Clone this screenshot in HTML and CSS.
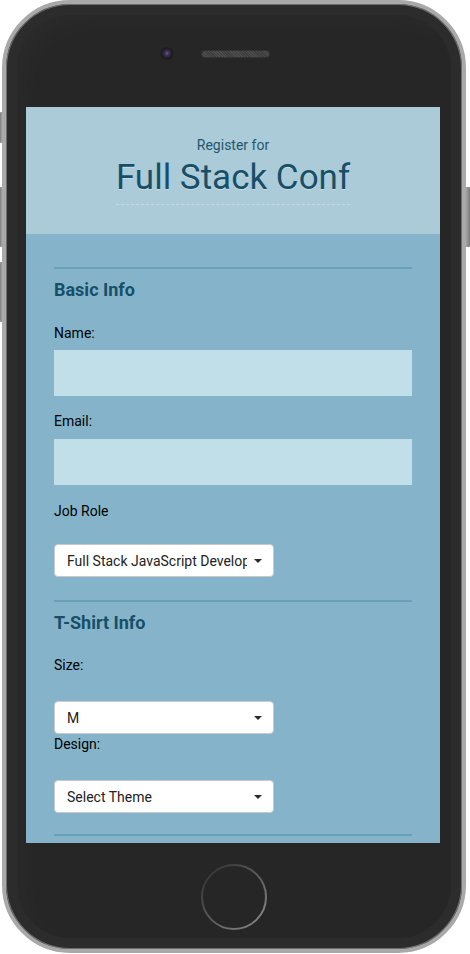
FILE: index.html
```
<!DOCTYPE html>
<html lang="en">
<head>
<meta charset="utf-8">
<title>Full Stack Conf</title>
<link rel="stylesheet" href="styles.css">
</head>
<body>
<div class="device">
  <div class="side side-left">
    <span class="btn btn-mute"></span>
    <span class="btn btn-vol"></span>
    <span class="btn btn-vol btn-vol2"></span>
  </div>
  <div class="phone">
    <div class="top-bezel">
      <span class="camera"></span>
      <span class="speaker"></span>
    </div>
    <div class="screen">
      <header class="hero">
        <span class="hero-pre">Register for</span>
        <h1 class="hero-title">Full Stack Conf</h1>
      </header>
      <main class="form">
        <section class="group">
          <hr class="rule">
          <h2 class="group-title">Basic Info</h2>
          <label class="label label-name" for="name">Name:</label>
          <input class="text-input" id="name" type="text">
          <label class="label label-email" for="mail">Email:</label>
          <input class="text-input text-input-email" id="mail" type="email">
          <label class="label label-job" for="title">Job Role</label>
          <div class="select-wrap select-job">
            <select class="select" id="title">
              <option>Full Stack JavaScript Developer</option>
            </select>
          </div>
        </section>
        <section class="group">
          <hr class="rule">
          <h2 class="group-title">T-Shirt Info</h2>
          <label class="label label-size" for="size">Size:</label>
          <div class="select-wrap select-size">
            <select class="select" id="size">
              <option>S</option>
              <option selected>M</option>
              <option>L</option>
              <option>XL</option>
            </select>
          </div>
          <label class="label label-design" for="design">Design:</label>
          <div class="select-wrap select-design">
            <select class="select" id="design">
              <option>Select Theme</option>
            </select>
          </div>
        </section>
        <section class="group">
          <hr class="rule rule-last">
        </section>
      </main>
    </div>
    <div class="bottom-bezel">
      <svg class="home" width="68" height="68" viewBox="0 0 68 68" aria-hidden="true">
        <defs>
          <linearGradient id="hg" x1="0" y1="0" x2="1" y2="1">
            <stop offset="0" stop-color="#2e2e2e"/>
            <stop offset="0.5" stop-color="#5a5a5a"/>
            <stop offset="1" stop-color="#8c8c8c"/>
          </linearGradient>
        </defs>
        <circle cx="34" cy="34" r="32" fill="none" stroke="url(#hg)" stroke-width="2"/>
      </svg>
    </div>
  </div>
  <div class="side side-right">
    <span class="btn btn-power"></span>
  </div>
</div>
</body>
</html>
```
FILE: styles.css
```
* { box-sizing: border-box; }

html, body {
  margin: 0;
  padding: 0;
  background: #ffffff;
}

body {
  font-family: Roboto, "Liberation Sans", sans-serif;
  width: 470px;
  height: 954px;
  overflow: hidden;
}

.device {
  display: flex;
  align-items: flex-start;
}

.side {
  display: flex;
  flex-direction: column;
}

.side-left {
  width: 2px;
  padding-top: 112px;
}

.side-right {
  width: 4px;
  padding-top: 187px;
}

.btn {
  display: block;
  background: linear-gradient(90deg, #7d7d7d, #a4a4a4);
  border-radius: 1px 0 0 1px;
}

.btn-mute { height: 31px; }
.btn-vol { height: 60px; margin-top: 44px; }
.btn-vol2 { margin-top: 15px; }

.btn-power {
  height: 60px;
  background: linear-gradient(90deg, #a4a4a4, #7d7d7d);
  border-radius: 0 1px 1px 0;
}

.phone {
  width: 464px;
  height: 953px;
  border: 4px solid #a9a9a9;
  border-radius: 68px;
  background: #262626;
  box-shadow:
    inset 0 0 0 1px #6d6d6d,
    inset 0 0 0 11px #2c2c2c,
    inset 12px 12px 40px rgba(255,255,255,0.03);
  display: flex;
  flex-direction: column;
}

.top-bezel {
  height: 103px;
  padding: 0 0 3px 154px;
  display: flex;
  align-items: center;
  gap: 28px;
}

.camera {
  width: 14px;
  height: 14px;
  border-radius: 50%;
  background: radial-gradient(circle at 50% 45%, #6b5a93 0, #3d3259 2px, #2a2438 4px, #1b1b1b 5px, #222 7px);
}

.speaker {
  width: 67px;
  height: 6px;
  border-radius: 3px;
  background:
    repeating-linear-gradient(45deg, #4d4d4d 0 1px, #3d3d3d 1px 2px);
  box-shadow: 0 0 0 1px #333;
}

.screen {
  width: 414px;
  height: 736px;
  margin-left: 20px;
  overflow: hidden;
  background: #85b4ca;
}

.hero {
  height: 127px;
  background: #abcbd8;
  padding-top: 30px;
  display: flex;
  flex-direction: column;
  align-items: center;
}

.hero-pre {
  font-size: 14px;
  line-height: 17px;
  color: #1f5870;
}

.hero-title {
  margin: 3px 0 0;
  font-size: 35px;
  line-height: 42px;
  font-weight: 400;
  color: #184f68;
  text-shadow: 0 1px 0 rgba(255,255,255,0.35);
  padding-bottom: 5px;
  border-bottom: 1px dashed #c6dae3;
}

.form {
  padding: 33px 28px 0;
}

.group {
  display: flex;
  flex-direction: column;
  align-items: flex-start;
}

.rule {
  width: 100%;
  height: 2px;
  margin: 0;
  border: 0;
  background: #69a0b8;
}

.group-title {
  margin: 10px 0 0;
  font-size: 18px;
  line-height: 22px;
  font-weight: 700;
  color: #184f68;
}

.label {
  display: block;
  font-size: 14px;
  line-height: 18px;
  color: #000;
}

.label-name { margin-top: 23px; }
.label-email { margin-top: 16px; }
.label-job { margin-top: 17px; }
.label-size { margin-top: 22px; }
.label-design { margin-top: 1px; }

.text-input {
  display: block;
  width: 100%;
  height: 46px;
  margin-top: 8px;
  border: 0;
  border-radius: 0;
  background: #c1dfe9;
  font: inherit;
}

.text-input-email { margin-top: 9px; }

.select-wrap {
  position: relative;
  width: 220px;
}

.select-job { margin-top: 24px; }
.select-size { margin-top: 27px; }
.select-design { margin-top: 27px; }

.select {
  -webkit-appearance: none;
  appearance: none;
  display: block;
  width: 100%;
  height: 33px;
  margin: 0;
  padding: 0 26px 0 12px;
  border: 1px solid #c9c9c9;
  border-radius: 4px;
  background: #ffffff;
  font-family: Roboto, "Liberation Sans", sans-serif;
  font-size: 14px;
  color: #222;
}

.select-wrap::after {
  content: "";
  position: absolute;
  right: 12px;
  top: 15px;
  border-left: 4px solid transparent;
  border-right: 4px solid transparent;
  border-top: 4px solid #2a2a2a;
  pointer-events: none;
}

.group:nth-of-type(2) .rule { margin-top: 23px; }
.rule-last { margin-top: 21px; }

.bottom-bezel {
  flex: 1;
  display: flex;
  justify-content: center;
  padding-top: 20px;
  padding-right: 1px;
}

.home {
  display: block;
}
```
